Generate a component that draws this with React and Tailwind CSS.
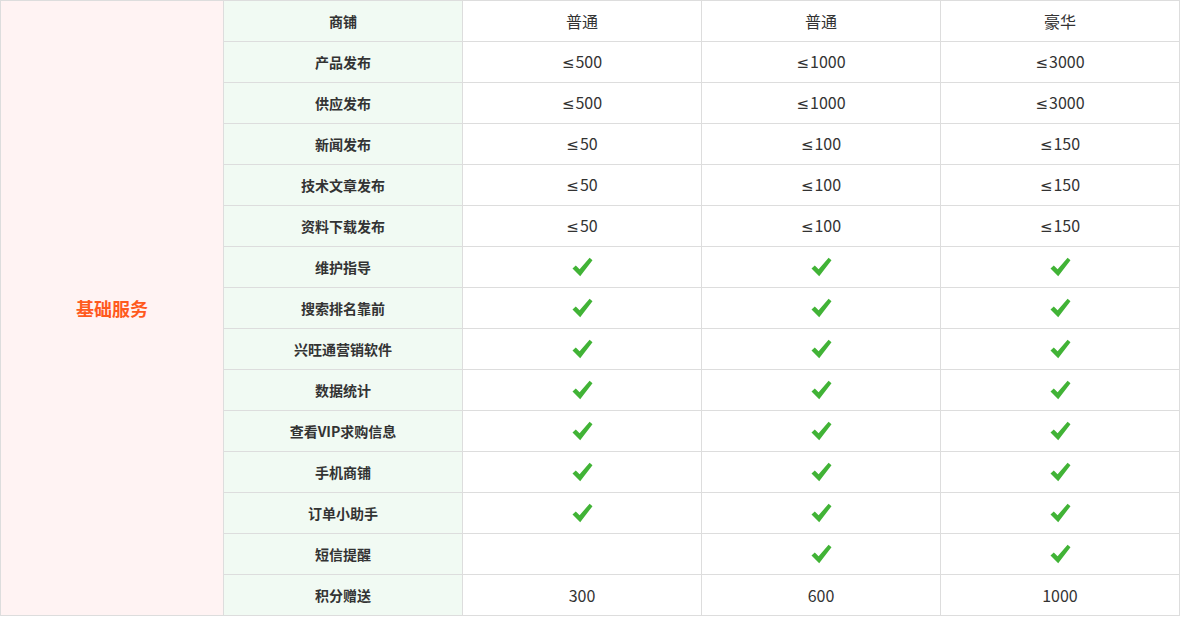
import React from "react";

const rows = [
  ["商铺", "普通", "普通", "豪华"],
  ["产品发布", "≤500", "≤1000", "≤3000"],
  ["供应发布", "≤500", "≤1000", "≤3000"],
  ["新闻发布", "≤50", "≤100", "≤150"],
  ["技术文章发布", "≤50", "≤100", "≤150"],
  ["资料下载发布", "≤50", "≤100", "≤150"],
  ["维护指导", true, true, true],
  ["搜索排名靠前", true, true, true],
  ["兴旺通营销软件", true, true, true],
  ["数据统计", true, true, true],
  ["查看VIP求购信息", true, true, true],
  ["手机商铺", true, true, true],
  ["订单小助手", true, true, true],
  ["短信提醒", "", true, true],
  ["积分赠送", "300", "600", "1000"],
];

function Check() {
  return (
    <svg width="21" height="20" viewBox="0 0 21 20">
      <path d="M0.5 11.5 L3.8 8.6 L7.6 12.2 L17.6 0.8 L20.5 3.2 L8.2 19.2 Z" fill="#41b336" />
    </svg>
  );
}

function Value({ v }) {
  if (v === true) return <Check />;
  if (typeof v === "string" && v.startsWith("≤")) {
    return (
      <span>
        <span className="text-[15px] mr-px" style={{ fontFamily: '"DejaVu Sans", sans-serif' }}>≤</span>
        {v.slice(1)}
      </span>
    );
  }
  return v;
}

export default function App() {
  const font = { fontFamily: '"Microsoft YaHei", "Noto Sans CJK SC", "Noto Sans", sans-serif' };
  return (
    <div className="w-[1180px] h-[617px] bg-white" style={font}>
      <div className="grid grid-cols-[222px_238px_238px_238px_238px] auto-rows-[40px] gap-px bg-[#dddddd] p-px w-[1180px]">
        <div className="row-span-15 bg-[#fff3f3] flex items-center justify-center text-[18px] font-bold text-[#ff5a1e]">
          基础服务
        </div>
        {rows.map((r, i) => (
          <React.Fragment key={i}>
            <div className="bg-[#f1faf3] flex items-center justify-center text-[14px] font-bold text-[#333333]">
              {r[0]}
            </div>
            {r.slice(1).map((v, j) => (
              <div key={j} className="bg-white flex items-center justify-center text-[16px] text-[#333333]">
                <Value v={v} />
              </div>
            ))}
          </React.Fragment>
        ))}
      </div>
    </div>
  );
}
